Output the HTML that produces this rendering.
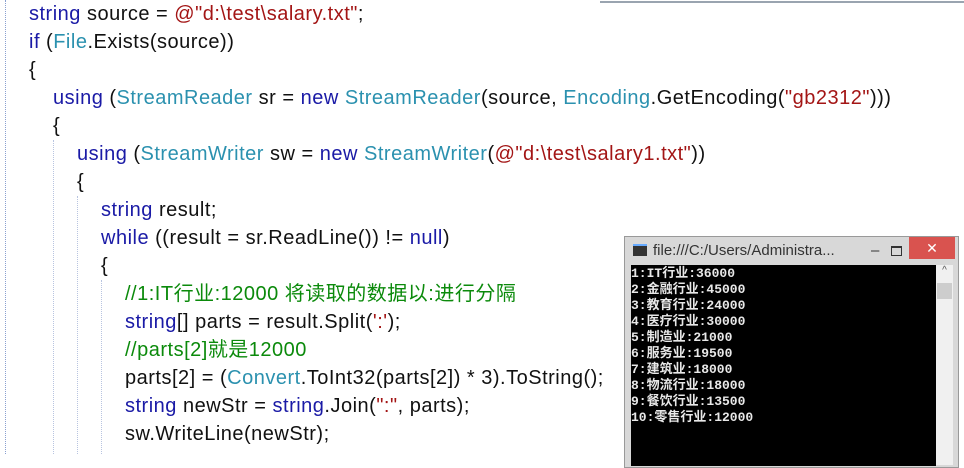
<!DOCTYPE html>
<html><head><meta charset="utf-8"><style>
body{margin:0;width:964px;height:454px;overflow:hidden;background:#fff;position:relative;font-family:"Liberation Sans","Noto Sans CJK SC",sans-serif}
.l{position:absolute;font-size:20px;letter-spacing:0.5px;line-height:28px;white-space:pre;color:#111}
.k{color:#1a1aa6}.t{color:#2b91af}.s{color:#a31515}.c{color:#0b8a0b}
.g{position:absolute;width:0;border-left:1px dotted #8aa0d0}
#con{position:absolute;left:624px;top:236px;width:333px;height:230px;background:#d8d8d8;border:1px solid #999}
#tb{position:absolute;left:0;top:0;width:333px;height:28px;font-size:15px;color:#333;line-height:28px}
#scr{position:absolute;left:6px;top:28px;width:305px;height:200px;background:#000;color:#e8e8e8;font-family:"Liberation Mono","Noto Sans CJK SC",monospace;font-weight:bold;font-size:13px;line-height:16px;white-space:pre;padding-top:1px}
#sb{position:absolute;left:311px;top:28px;width:17px;height:200px;background:#f0f0f0}
</style></head><body>
<div style="position:absolute;left:600px;top:1px;width:364px;height:2px;background:#9aa4b0"></div>
<div class="g" style="left:5px;top:0;height:454px"></div>
<div class="g" style="left:53px;top:140px;height:314px;border-color:#b8c4e0"></div>
<div class="g" style="left:77px;top:196px;height:258px;border-color:#b8c4e0"></div>
<div class="g" style="left:101px;top:280px;height:174px;border-color:#b8c4e0"></div>
<div class="l" style="left:29px;top:0"><span class="k">string</span> source = <span class="s">@"d:\test\salary.txt"</span>;</div>
<div class="l" style="left:29px;top:28px"><span class="k">if</span> (<span class="t">File</span>.Exists(source))</div>
<div class="l" style="left:29px;top:56px">{</div>
<div class="l" style="left:53px;top:84px"><span class="k">using</span> (<span class="t">StreamReader</span> sr = <span class="k">new</span> <span class="t">StreamReader</span>(source, <span class="t">Encoding</span>.GetEncoding(<span class="s">"gb2312"</span>)))</div>
<div class="l" style="left:53px;top:112px">{</div>
<div class="l" style="left:77px;top:140px"><span class="k">using</span> (<span class="t">StreamWriter</span> sw = <span class="k">new</span> <span class="t">StreamWriter</span>(<span class="s">@"d:\test\salary1.txt"</span>))</div>
<div class="l" style="left:77px;top:168px">{</div>
<div class="l" style="left:101px;top:196px"><span class="k">string</span> result;</div>
<div class="l" style="left:101px;top:224px"><span class="k">while</span> ((result = sr.ReadLine()) != <span class="k">null</span>)</div>
<div class="l" style="left:101px;top:252px">{</div>
<div class="l" style="left:125px;top:280px"><span class="c">//1:IT行业:12000 将读取的数据以:进行分隔</span></div>
<div class="l" style="left:125px;top:308px"><span class="k">string</span>[] parts = result.Split(<span class="s">':'</span>);</div>
<div class="l" style="left:125px;top:336px"><span class="c">//parts[2]就是12000</span></div>
<div class="l" style="left:125px;top:364px">parts[2] = (<span class="t">Convert</span>.ToInt32(parts[2]) * 3).ToString();</div>
<div class="l" style="left:125px;top:392px"><span class="k">string</span> newStr = <span class="k">string</span>.Join(<span class="s">":"</span>, parts);</div>
<div class="l" style="left:125px;top:420px">sw.WriteLine(newStr);</div>
<div id="con">
<div id="tb"><span style="display:inline-block;width:14px;height:10px;background:#333;border-top:2px solid #6af;margin:0 6px 0 8px;vertical-align:-1px"></span>file:///C:/Users/Administra...
<span style="position:absolute;left:246px;top:0">–</span>
<span style="position:absolute;left:266px;top:9px;width:9px;height:7px;border:1px solid #333;border-top-width:2px"></span>
<span style="position:absolute;left:284px;top:0;width:46px;height:22px;background:#d9534f;color:#fff;text-align:center;line-height:22px;font-size:14px">✕</span></div>
<div id="scr">1:IT行业:36000
2:金融行业:45000
3:教育行业:24000
4:医疗行业:30000
5:制造业:21000
6:服务业:19500
7:建筑业:18000
8:物流行业:18000
9:餐饮行业:13500
10:零售行业:12000</div>
<div id="sb"><div style="font-size:10px;text-align:center;color:#555">^</div><div style="position:absolute;top:18px;left:1px;width:15px;height:16px;background:#cdcdcd"></div></div>
</div>
</body></html>
